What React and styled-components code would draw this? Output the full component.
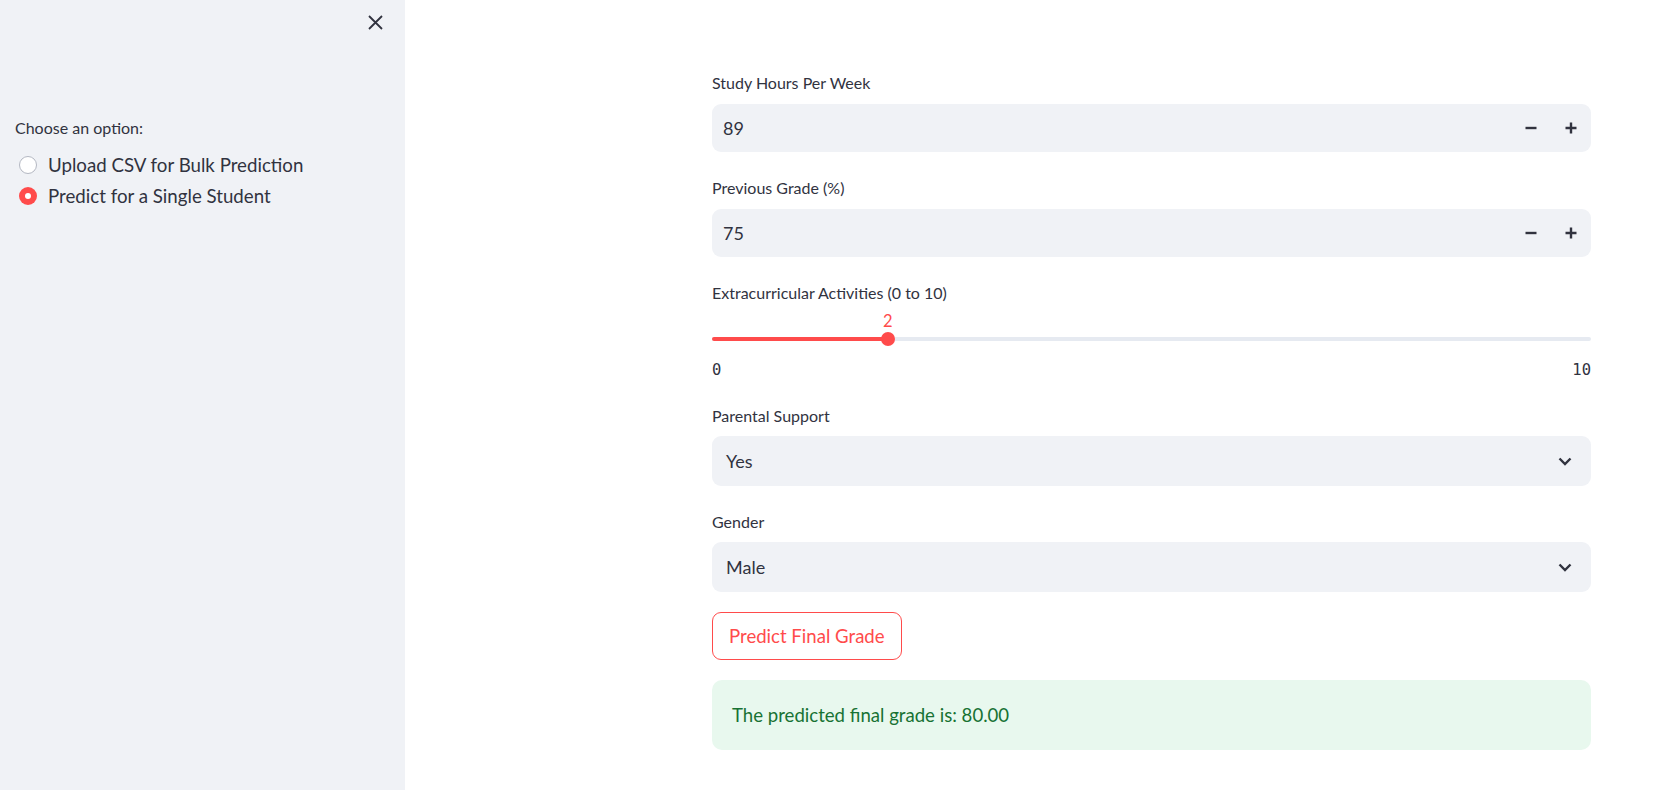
import React from "react";
import styled, { createGlobalStyle } from "styled-components";

const Global = createGlobalStyle`
  html, body { margin: 0; padding: 0; background: #ffffff; }
  body { font-family: "Lato", "Noto Sans", sans-serif; color: #31333f; }
  * { box-sizing: border-box; }
`;

const Page = styled.div`
  display: flex;
  width: 100%;
  height: 100vh;
  overflow: hidden;
`;

const Sidebar = styled.aside`
  width: 405px;
  flex: 0 0 405px;
  height: 100%;
  background: #f0f2f6;
  display: flex;
  flex-direction: column;
  padding: 0 15px;
`;

const SidebarHeader = styled.div`
  display: flex;
  justify-content: flex-end;
  height: 48px;
  padding-top: 8px;
`;

const CloseButton = styled.button`
  width: 28px;
  height: 28px;
  border: none;
  background: transparent;
  padding: 0;
  margin-right: 1px;
  display: flex;
  align-items: center;
  justify-content: center;
  color: #31333f;
  cursor: pointer;
`;

const RadioGroup = styled.div`
  display: flex;
  flex-direction: column;
  margin-top: 69px;
`;

const GroupLabel = styled.div`
  font-size: 16px;
  line-height: 22px;
  margin-bottom: 10px;
`;

const RadioRow = styled.label`
  display: flex;
  align-items: center;
  gap: 11px;
  height: 31.5px;
  font-size: 18.7px;
  cursor: pointer;
  padding-left: 4px;
`;

const RadioDot = styled.span`
  width: 18px;
  height: 18px;
  border-radius: 50%;
  flex: 0 0 18px;
  background: ${(p) => (p.$checked ? "#ff4b4b" : "#ffffff")};
  border: ${(p) => (p.$checked ? "none" : "1.5px solid #b4b8c2")};
  display: flex;
  align-items: center;
  justify-content: center;
  &::after {
    content: "";
    width: 6px;
    height: 6px;
    border-radius: 50%;
    background: #ffffff;
    display: ${(p) => (p.$checked ? "block" : "none")};
  }
`;

const Main = styled.main`
  flex: 1;
  display: flex;
  padding-left: 307px;
`;

const Content = styled.div`
  width: 879px;
  display: flex;
  flex-direction: column;
  padding-top: 72px;
`;

const Form = styled.div`
  display: flex;
  flex-direction: column;
  gap: 25px;
`;

const Field = styled.div`
  display: flex;
  flex-direction: column;
`;

const Label = styled.div`
  font-size: 16px;
  line-height: 22px;
  height: 22px;
  margin-bottom: ${(p) => (p.$gap ?? 10)}px;
  color: #31333f;
`;

const InputBox = styled.div`
  height: ${(p) => p.$h}px;
  background: #f0f2f6;
  border-radius: 9px;
  display: flex;
  align-items: center;
  padding-left: ${(p) => p.$pl}px;
  padding-right: ${(p) => p.$pr}px;
  font-size: 18px;
  color: #31333f;
`;

const Value = styled.span`
  flex: 1;
`;

const StepButton = styled.button`
  width: 40px;
  height: 100%;
  border: none;
  background: transparent;
  display: flex;
  align-items: center;
  justify-content: center;
  padding: 0;
  color: #31333f;
  cursor: pointer;
`;

const SliderValueRow = styled.div`
  position: relative;
  height: 20px;
  margin-top: 7px;
`;

const SliderValue = styled.span`
  position: absolute;
  top: 0;
  transform: translateX(-50%);
  font-size: 16.5px;
  line-height: 20px;
  color: #ff4b4b;
`;

const TrackArea = styled.div`
  position: relative;
  height: 16px;
  display: flex;
  align-items: center;
`;

const Track = styled.div`
  width: 100%;
  height: 4px;
  border-radius: 2px;
  background: #e6eaf1;
  overflow: hidden;
  display: flex;
`;

const TrackFill = styled.div`
  height: 100%;
  background: #ff4b4b;
`;

const Thumb = styled.div`
  position: absolute;
  top: 1px;
  width: 14px;
  height: 14px;
  border-radius: 50%;
  background: #ff4b4b;
  transform: translateX(-50%);
`;

const Ticks = styled.div`
  display: flex;
  justify-content: space-between;
  margin-top: 13px;
  font-family: "DejaVu Sans Mono", "Liberation Mono", monospace;
  font-size: 15.5px;
  line-height: 20px;
  color: #31333f;
`;

const Actions = styled.div`
  display: flex;
  flex-direction: column;
  align-items: flex-start;
  gap: 20px;
  margin-top: 20px;
`;

const PrimaryButton = styled.button`
  height: 48px;
  padding: 0 16px;
  background: #ffffff;
  border: 1px solid #ff4b4b;
  border-radius: 9px;
  color: #ff4b4b;
  font-family: "Lato", "Noto Sans", sans-serif;
  font-size: 18.6px;
  cursor: pointer;
`;

const Alert = styled.div`
  width: 100%;
  height: 70px;
  border-radius: 10px;
  background: #e8f8ee;
  color: #177233;
  display: flex;
  align-items: center;
  padding: 0 20px;
  font-size: 18.6px;
`;

const Minus = () => (
  <svg width="12" height="12" viewBox="0 0 12 12">
    <path d="M0.5 6H11.5" stroke="currentColor" strokeWidth="2.4" />
  </svg>
);

const Plus = () => (
  <svg width="12" height="12" viewBox="0 0 12 12">
    <path d="M0.5 6H11.5M6 0.5V11.5" stroke="currentColor" strokeWidth="2.4" />
  </svg>
);

const Chevron = () => (
  <svg width="14" height="9" viewBox="0 0 14 9">
    <path d="M1.5 1.5L7 7L12.5 1.5" fill="none" stroke="currentColor" strokeWidth="2.4" />
  </svg>
);

const XIcon = () => (
  <svg width="15" height="15" viewBox="0 0 15 15">
    <path d="M1 1L14 14M14 1L1 14" stroke="currentColor" strokeWidth="1.8" />
  </svg>
);

const NumberInput = ({ label, value }) => (
  <Field>
    <Label>{label}</Label>
    <InputBox $h={48} $pl={11} $pr={0}>
      <Value>{value}</Value>
      <StepButton aria-label="decrement"><Minus /></StepButton>
      <StepButton aria-label="increment"><Plus /></StepButton>
    </InputBox>
  </Field>
);

const SelectInput = ({ label, value }) => (
  <Field>
    <Label $gap={9}>{label}</Label>
    <InputBox $h={50} $pl={14} $pr={19}>
      <Value>{value}</Value>
      <Chevron />
    </InputBox>
  </Field>
);

const Slider = ({ label, min, max, value }) => {
  const pct = ((value - min) / (max - min)) * 100;
  return (
    <Field>
      <Label $gap={0}>{label}</Label>
      <SliderValueRow>
        <SliderValue style={{ left: `${pct}%` }}>{value}</SliderValue>
      </SliderValueRow>
      <TrackArea>
        <Track>
          <TrackFill style={{ width: `${pct}%` }} />
        </Track>
        <Thumb style={{ left: `${pct}%` }} />
      </TrackArea>
      <Ticks>
        <span>{min}</span>
        <span>{max}</span>
      </Ticks>
    </Field>
  );
};

export default function App() {
  return (
    <>
      <Global />
      <Page>
        <Sidebar>
          <SidebarHeader>
            <CloseButton aria-label="close"><XIcon /></CloseButton>
          </SidebarHeader>
          <RadioGroup>
            <GroupLabel>Choose an option:</GroupLabel>
            <RadioRow>
              <RadioDot />
              Upload CSV for Bulk Prediction
            </RadioRow>
            <RadioRow>
              <RadioDot $checked />
              Predict for a Single Student
            </RadioRow>
          </RadioGroup>
        </Sidebar>
        <Main>
          <Content>
            <Form>
              <NumberInput label="Study Hours Per Week" value="89" />
              <NumberInput label="Previous Grade (%)" value="75" />
              <Slider label="Extracurricular Activities (0 to 10)" min={0} max={10} value={2} />
              <SelectInput label="Parental Support" value="Yes" />
              <SelectInput label="Gender" value="Male" />
            </Form>
            <Actions>
              <PrimaryButton>Predict Final Grade</PrimaryButton>
              <Alert>The predicted final grade is: 80.00</Alert>
            </Actions>
          </Content>
        </Main>
      </Page>
    </>
  );
}
